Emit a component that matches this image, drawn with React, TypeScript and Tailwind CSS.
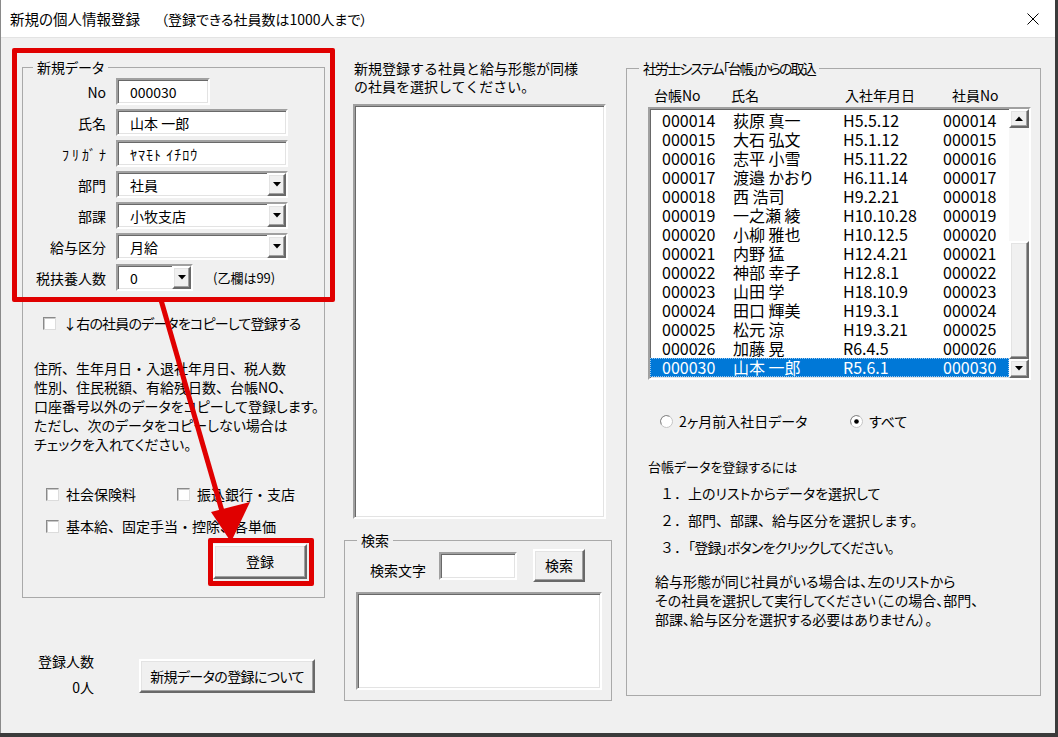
import React from "react";

const sunken =
  "border-2 border-t-[#a0a0a0] border-l-[#a0a0a0] border-r-[#ffffff] border-b-[#ffffff] shadow-[inset_1px_1px_0_#696969,inset_-1px_-1px_0_#e3e3e3] bg-white";
const raised =
  "border-2 border-t-[#ffffff] border-l-[#ffffff] border-r-[#696969] border-b-[#696969] shadow-[inset_-1px_-1px_0_#a0a0a0,inset_1px_1px_0_#e3e3e3] bg-[#f0f0f0]";
const NF = "[font-feature-settings:normal]";

// keep 、 and ・ full width while kana stay proportional
function FP({ t }: { t: string }) {
  const parts = t.split(/([、・])/);
  return (
    <>
      {parts.map((p, i) =>
        p === "、" || p === "・" ? (
          <span key={i} className={NF}>
            {p}
          </span>
        ) : (
          <React.Fragment key={i}>{p}</React.Fragment>
        )
      )}
    </>
  );
}

function DownTri() {
  return (
    <svg width="8" height="5" viewBox="0 0 8 5">
      <path d="M0 0H8L4 4.5Z" fill="#000" />
    </svg>
  );
}
function UpTri() {
  return (
    <svg width="8" height="5" viewBox="0 0 8 5">
      <path d="M0 5H8L4 0.5Z" fill="#000" />
    </svg>
  );
}

function TextBox({ w, value, className = "" }: { w: string; value: string; className?: string }) {
  return (
    <div className={`${sunken} ${w} h-full flex items-center pl-[12px] text-[14px] leading-[18px] ${className}`}>
      {value}
    </div>
  );
}

function Combo({ w, value }: { w: string; value: string }) {
  return (
    <div className={`${sunken} ${w} h-full flex items-stretch`}>
      <div className="flex-1 flex items-center pl-[12px] text-[14px] leading-[18px]">{value}</div>
      <div className={`${raised} w-[19px] flex items-center justify-center`}>
        <DownTri />
      </div>
    </div>
  );
}

function Check({ label, w, className = "" }: { label: string; w?: string; className?: string }) {
  return (
    <div className={`flex items-center h-[18px] ${w ?? ""}`}>
      <div className="shrink-0 w-[13px] h-[13px] bg-white border border-t-[#8a8a8a] border-l-[#8a8a8a] border-r-[#dcdcdc] border-b-[#dcdcdc] shadow-[inset_1px_1px_0_#c8c8c8]" />
      <span className={`ml-[7px] text-[14px] leading-[18px] whitespace-nowrap ${className}`}>{label}</span>
    </div>
  );
}

function Radio({ label, checked, w }: { label: string; checked?: boolean; w?: string }) {
  return (
    <div className={`flex items-center h-[18px] ${w ?? ""}`}>
      <svg className="shrink-0" width="13" height="13" viewBox="0 0 13 13">
        <circle cx="6.5" cy="6.5" r="6" fill="#fff" stroke="#c4c4c4" />
        <path d="M1.3 9.5A6 6 0 0 1 9.5 1.3" fill="none" stroke="#8a8a8a" />
        {checked && <circle cx="6.5" cy="6.5" r="2.3" fill="#000" />}
      </svg>
      <span className="ml-[6px] text-[14px] leading-[18px] whitespace-nowrap">{label}</span>
    </div>
  );
}

function GroupTitle({ text, ml, className = "" }: { text: string; ml: string; className?: string }) {
  return (
    <div className={`-mt-[10px] ${ml} px-[4px] bg-[#f0f0f0] w-fit h-[18px] text-[14px] leading-[18px] whitespace-nowrap ${className}`}>
      {text}
    </div>
  );
}

const rows: [string, string, string, string][] = [
  ["000014", "荻原 真一", "H5.5.12", "000014"],
  ["000015", "大石 弘文", "H5.1.12", "000015"],
  ["000016", "志平 小雪", "H5.11.22", "000016"],
  ["000017", "渡邉 かおり", "H6.11.14", "000017"],
  ["000018", "西 浩司", "H9.2.21", "000018"],
  ["000019", "一之瀬 綾", "H10.10.28", "000019"],
  ["000020", "小柳 雅也", "H10.12.5", "000020"],
  ["000021", "内野 猛", "H12.4.21", "000021"],
  ["000022", "神部 幸子", "H12.8.1", "000022"],
  ["000023", "山田 学", "H18.10.9", "000023"],
  ["000024", "田口 輝美", "H19.3.1", "000024"],
  ["000025", "松元 涼", "H19.3.21", "000025"],
  ["000026", "加藤 晃", "R6.4.5", "000026"],
  ["000030", "山本 一郎", "R5.6.1", "000030"],
];

function LeftCol() {
  const labelCls = "w-[83px] shrink-0 text-right text-[14px] leading-[18px] whitespace-nowrap";
  return (
    <div className="ml-[21px] w-[303px] flex flex-col">
      <div className="mt-[29px] h-[531px] border border-[#a9a9a9] flex flex-col">
        <GroupTitle text="新規データ" ml="ml-[10px]" />
        <div className="mt-[2px] flex flex-col gap-[4px]">
          <div className="flex items-center h-[27px]">
            <div className={labelCls}>No</div>
            <div className="ml-[10px] h-full flex">
              <TextBox w="w-[94px]" value="000030" />
            </div>
          </div>
          <div className="flex items-center h-[27px]">
            <div className={labelCls}>氏名</div>
            <div className="ml-[10px] h-full flex">
              <TextBox w="w-[172px]" value="山本 一郎" />
            </div>
          </div>
          <div className="flex items-center h-[27px]">
            <div className={labelCls}>
              <span className={`${NF} tracking-[3px] -mr-[3px]`}>ﾌﾘｶﾞﾅ</span>
            </div>
            <div className="ml-[10px] h-full flex">
              <TextBox w="w-[172px]" value="ﾔﾏﾓﾄ ｲﾁﾛｳ" className={`${NF} tracking-[1px]`} />
            </div>
          </div>
          <div className="flex items-center h-[27px]">
            <div className={labelCls}>部門</div>
            <div className="ml-[10px] h-full flex">
              <Combo w="w-[172px]" value="社員" />
            </div>
          </div>
          <div className="flex items-center h-[27px]">
            <div className={labelCls}>部課</div>
            <div className="ml-[10px] h-full flex">
              <Combo w="w-[172px]" value="小牧支店" />
            </div>
          </div>
          <div className="flex items-center h-[27px]">
            <div className={labelCls}>給与区分</div>
            <div className="ml-[10px] h-full flex">
              <Combo w="w-[172px]" value="月給" />
            </div>
          </div>
          <div className="flex items-center h-[27px]">
            <div className={labelCls}>税扶養人数</div>
            <div className="ml-[10px] h-full flex">
              <Combo w="w-[77px]" value="0" />
            </div>
            <div className="ml-[20px] text-[13px] leading-[18px] whitespace-nowrap">(乙欄は99)</div>
          </div>
        </div>

        <div className="mt-[23px] ml-[20px]">
          <Check label="↓右の社員のデータをコピーして登録する" className="tracking-[-0.8px]" />
        </div>

        <div className="mt-[27px] ml-[11px] text-[14px] leading-[19px] whitespace-nowrap">
          <div><FP t="住所、生年月日・入退社年月日、税人数" /></div>
          <div><FP t="性別、住民税額、有給残日数、台帳NO、" /></div>
          <div><FP t="口座番号以外のデータをコピーして登録します。" /></div>
          <div><FP t="ただし、次のデータをコピーしない場合は" /></div>
          <div><FP t="チェックを入れてください。" /></div>
        </div>

        <div className="mt-[31px] ml-[23px] flex">
          <Check label="社会保険料" w="w-[131px]" className={NF} />
          <Check label="振込銀行・支店" className={NF} />
        </div>
        <div className="mt-[14px] ml-[23px] flex">
          <Check label="基本給、固定手当・控除、各単価" className={NF} />
        </div>
        <div className="mt-[9px] ml-[190px]">
          <div className={`${raised} w-[94px] h-[35px] flex items-center justify-center text-[14px]`}>登録</div>
        </div>
      </div>

      <div className="mt-[54px] flex items-start">
        <div className="ml-[12px] w-[60px] text-right text-[14px] leading-[18px]">
          <div>登録人数</div>
          <div className="mt-[8px]">0人</div>
        </div>
        <div className={`${raised} ml-[45px] mt-[7px] w-[176px] h-[34px] flex items-center justify-center text-[14px] tracking-[-0.6px] whitespace-nowrap`}>
          新規データの登録について
        </div>
      </div>
    </div>
  );
}

function MidCol() {
  return (
    <div className="ml-[19px] w-[268px] flex flex-col">
      <div className={`mt-[21px] pl-[10px] text-[14px] leading-[18px] whitespace-nowrap ${NF}`}>
        <div>新規登録する社員と給与形態が同様</div>
        <div>の社員を選択してください。</div>
      </div>
      <div className={`${sunken} mt-[9px] ml-[9px] w-[253px] h-[415px]`} />
      <div className="mt-[21px] w-[268px] h-[161px] border border-[#a9a9a9] flex flex-col">
        <GroupTitle text="検索" ml="ml-[12px]" />
        <div className="flex items-start">
          <div className="ml-[25px] mt-[12px] text-[14px] leading-[18px] whitespace-nowrap">検索文字</div>
          <div className={`${sunken} ml-[13px] mt-[3px] w-[78px] h-[28px]`} />
          <div className={`${raised} ml-[16px] w-[52px] h-[33px] flex items-center justify-center text-[14px]`}>検索</div>
        </div>
        <div className={`${sunken} mt-[10px] ml-[11px] w-[246px] h-[98px]`} />
      </div>
    </div>
  );
}

function RightCol() {
  return (
    <div className="ml-[14px] w-[415px] flex flex-col">
      <div className="mt-[30px] h-[628px] border border-[#a9a9a9] flex flex-col">
        <GroupTitle text="社労士システム「台帳」からの取込" ml="ml-[12px]" className="tracking-[-1.9px]" />
        <div className="mt-[9px] ml-[27px] flex h-[18px] text-[14px] leading-[18px] whitespace-nowrap">
          <div className="w-[77px]">台帳No</div>
          <div className="w-[114px]">氏名</div>
          <div className="w-[107px]">入社年月日</div>
          <div>社員No</div>
        </div>
        <div className={`${sunken} mt-[3px] ml-[21px] w-[383px] h-[273px] flex`}>
          <div className="flex-1 pt-[2px] flex flex-col">
            {rows.map((r, i) => {
              const sel = i === rows.length - 1;
              return (
                <div
                  key={r[0]}
                  className={`h-[19px] flex items-center pl-[12px] text-[16px] leading-[19px] whitespace-nowrap ${
                    sel ? "bg-[#0078d7] text-white outline-1 outline-dotted outline-[#9cc8f0] -outline-offset-1" : ""
                  }`}
                >
                  <div className="w-[71px]">{r[0]}</div>
                  <div className="w-[110px]">{r[1]}</div>
                  <div className="w-[100px]">{r[2]}</div>
                  <div>{r[3]}</div>
                </div>
              );
            })}
          </div>
          <div className="w-[20px] flex flex-col bg-[#f7f7f7]">
            <div className={`${raised} h-[19px] flex items-center justify-center`}>
              <UpTri />
            </div>
            <div className="flex-1" />
            <div className={`${raised} h-[118px]`} />
            <div className={`${raised} h-[19px] flex items-center justify-center`}>
              <DownTri />
            </div>
          </div>
        </div>

        <div className="mt-[32px] ml-[33px] flex">
          <Radio label="2ヶ月前入社日データ" w="w-[190px]" />
          <Radio label="すべて" checked />
        </div>

        <div className="mt-[28px] ml-[21px] text-[13px] leading-[18px] whitespace-nowrap">台帳データを登録するには</div>
        <div className="mt-[4px] ml-[33px] text-[14px] leading-[27px] whitespace-nowrap">
          <div className="flex">
            <span className={`w-[28px] ${NF}`}>１．</span>
            <span>上のリストからデータを選択して</span>
          </div>
          <div className="flex">
            <span className={`w-[28px] ${NF}`}>２．</span>
            <span className={NF}>部門、部課、給与区分を選択します。</span>
          </div>
          <div className="flex">
            <span className={`w-[28px] ${NF}`}>３．</span>
            <span className="tracking-[-0.8px]">「登録」ボタンをクリックしてください。</span>
          </div>
        </div>
        <div className="mt-[11px] ml-[28px] text-[14px] leading-[19px] whitespace-nowrap">
          <div>給与形態が同じ社員がいる場合は、左のリストから</div>
          <div>その社員を選択して実行してください（この場合、部門、</div>
          <div>部課、給与区分を選択する必要はありません）。</div>
        </div>
      </div>
    </div>
  );
}

export default function App() {
  return (
    <div className="relative w-[1058px] h-[737px] bg-[#3b3b3b] overflow-hidden font-['Noto_Sans_CJK_JP',sans-serif] [font-feature-settings:'palt'] text-black text-[14px]">
      <div className="w-[1055px] h-[733px] bg-[#f0f0f0] border-l border-[#8a8a8a] flex flex-col">
        <div className="h-[38px] bg-white border-b border-[#e3e3e3] flex items-center justify-between pl-[9px] pr-[16px]">
          <div className="text-[14.5px] leading-[20px] whitespace-nowrap">
            新規の個人情報登録<span className="inline-block w-[21px]" />
            <span className="text-[14px]">（登録できる社員数は1000人まで）</span>
          </div>
          <svg width="12" height="12" viewBox="0 0 12 12">
            <path d="M0.5 0.5L11.5 11.5M11.5 0.5L0.5 11.5" stroke="#000" strokeWidth="1" />
          </svg>
        </div>
        <div className="flex flex-1">
          <LeftCol />
          <MidCol />
          <RightCol />
        </div>
      </div>

      {/* red annotations */}
      <div className="absolute left-[12px] top-[48px] w-[323px] h-[254px] border-[5px] border-[#e00000] rounded-[2px] pointer-events-none" />
      <div className="absolute left-[208px] top-[538px] w-[106px] h-[48px] border-[5px] border-[#e00000] rounded-[2px] pointer-events-none" />
      <svg className="absolute left-0 top-0 pointer-events-none" width="1058" height="737" viewBox="0 0 1058 737">
        <line x1="161" y1="300" x2="224" y2="518" stroke="#e00000" strokeWidth="5" />
        <polygon points="231,542 211,512 250,502" fill="#e00000" />
      </svg>
    </div>
  );
}
